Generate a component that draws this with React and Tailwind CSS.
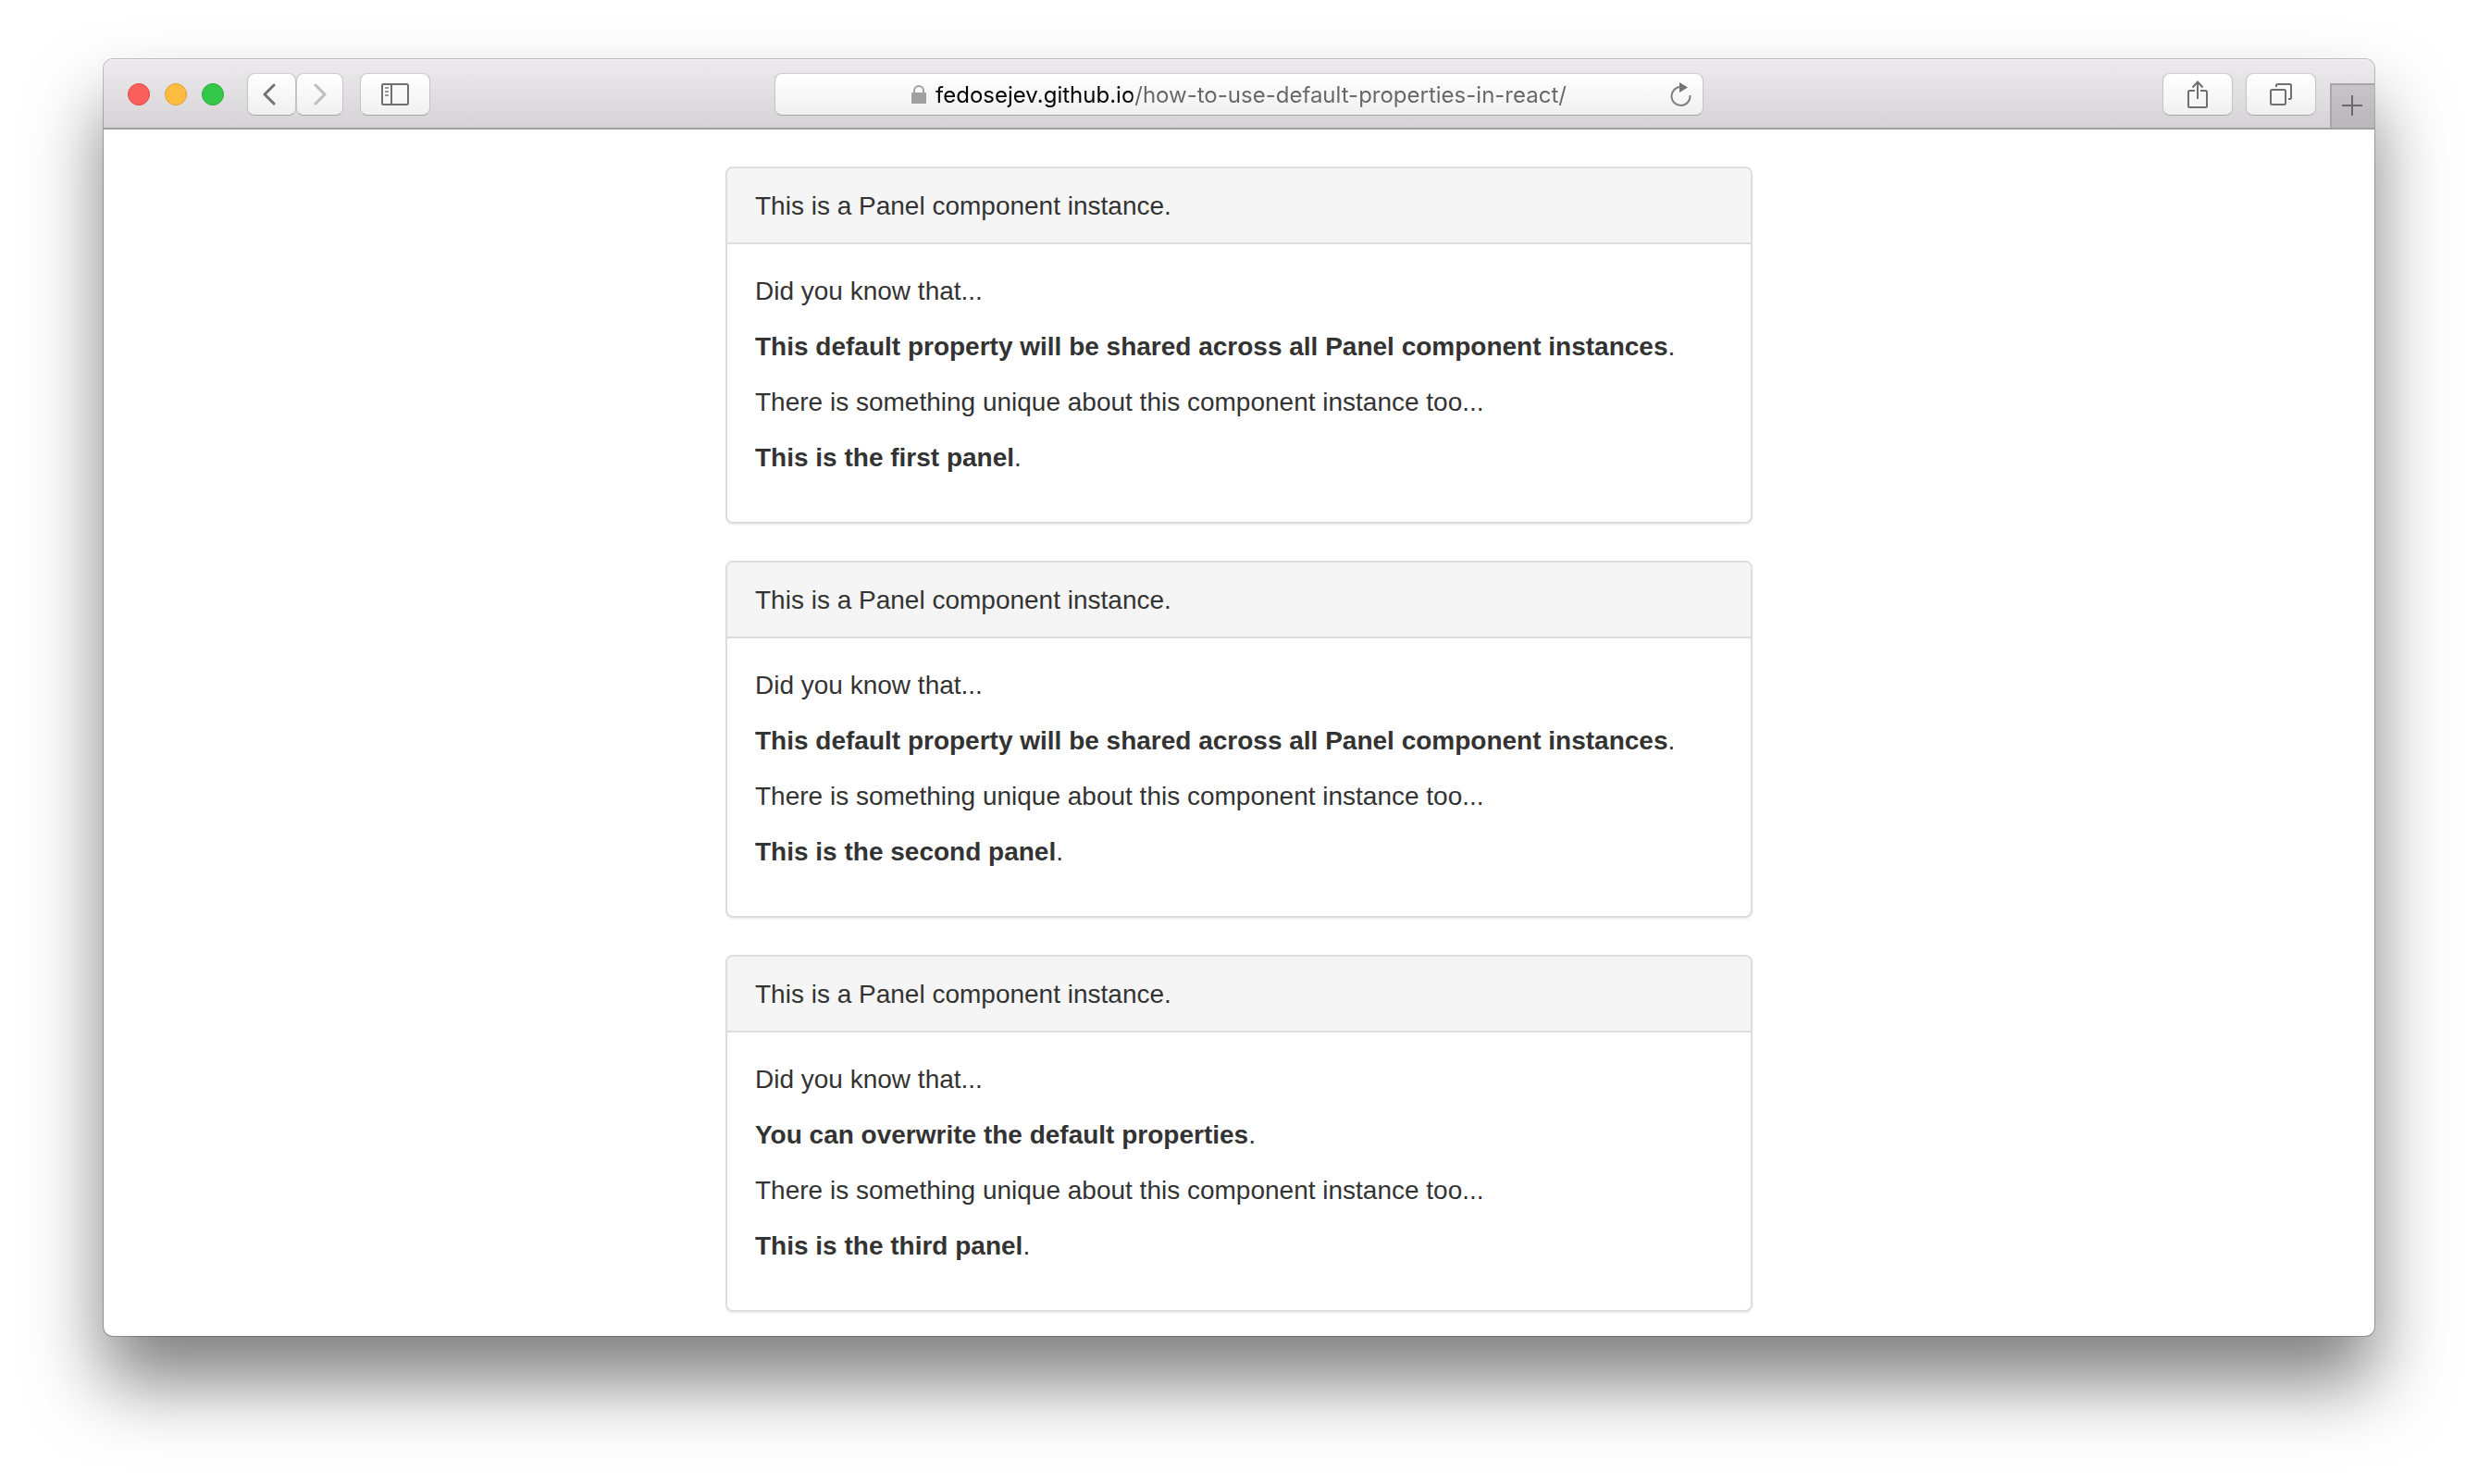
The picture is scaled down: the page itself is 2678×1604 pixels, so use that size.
const CHROME_BUTTON =
  "flex h-[46px] items-center justify-center rounded-lg border border-t-[#cfcdd0] border-x-[#c4c2c5] border-b-[#a9a7aa] bg-linear-to-b from-white to-[#f0f0f0] text-[#6f6f6f]";

const DID_YOU_KNOW = "This default property will be shared across all Panel component instances";

const panels = [
  { id: "first", content: DID_YOU_KNOW, unique: "This is the first panel" },
  { id: "second", content: DID_YOU_KNOW, unique: "This is the second panel" },
  { id: "third", content: "You can overwrite the default properties", unique: "This is the third panel" },
];

function BackIcon() {
  return (
    <svg width="14" height="24" viewBox="0 0 14 24" fill="none" stroke="#737373" strokeWidth="3" strokeLinecap="round" strokeLinejoin="round" aria-hidden="true">
      <path d="M12 2 2 12l10 10" />
    </svg>
  );
}

function ForwardIcon() {
  return (
    <svg width="14" height="24" viewBox="0 0 14 24" fill="none" stroke="#bdbdbd" strokeWidth="3" strokeLinecap="round" strokeLinejoin="round" aria-hidden="true">
      <path d="m2 2 10 10L2 22" />
    </svg>
  );
}

function SidebarIcon() {
  return (
    <svg width="30" height="24" viewBox="0 0 30 24" fill="none" stroke="currentColor" strokeWidth="2" aria-hidden="true">
      <rect x="1" y="1" width="28" height="22" rx="1.5" />
      <path d="M11 1v22" />
      <path d="M4 5h4M4 9h4M4 13h4" stroke="#9b9b9b" />
    </svg>
  );
}

function LockIcon() {
  return (
    <svg width="16" height="20" viewBox="0 0 16 20" fill="none" className="shrink-0" aria-hidden="true">
      <path d="M3 10V6a5 5 0 0 1 10 0v4" stroke="#a0a0a0" strokeWidth="2" />
      <rect y="8" width="16" height="12" rx="1" fill="#a0a0a0" />
    </svg>
  );
}

function ReloadIcon() {
  return (
    <svg width="24" height="26" viewBox="0 0 24 26" fill="none" aria-hidden="true">
      <path d="M13 5h-1a10 10 0 1 0 10.500 10v-1" stroke="#808080" strokeWidth="2" />
      <path d="M11 0v11l9-5.500z" fill="#757575" />
    </svg>
  );
}

function ShareIcon() {
  return (
    <svg width="22" height="30" viewBox="0 0 22 30" fill="none" stroke="currentColor" strokeWidth="2" aria-hidden="true">
      <path d="M8 11H2.500Q1 11 1 12.500v15Q1 29 2.500 29h17q1.500 0 1.500-1.500v-15Q21 11 19.500 11H14" />
      <path d="M11 20V2M5.500 7.500 11 1.500l5.500 6" />
    </svg>
  );
}

function TabsIcon() {
  return (
    <svg width="24" height="24" viewBox="0 0 24 24" fill="none" stroke="currentColor" strokeWidth="2" aria-hidden="true">
      <rect x="1" y="7" width="16" height="16" rx="1.5" />
      <path d="M7 4V2.500Q7 1 8.500 1h13Q23 1 23 2.500v13q0 1.500-1.500 1.500H20" />
    </svg>
  );
}

function PlusIcon() {
  return (
    <svg width="22" height="22" viewBox="0 0 22 22" fill="none" stroke="#6b696c" strokeWidth="2" aria-hidden="true">
      <path d="M11 0v22M0 11h22" />
    </svg>
  );
}

function Toolbar() {
  return (
    <header className="grid h-[76px] grid-cols-[1fr_minmax(0,1004px)_1fr] items-center border-b-2 border-[#a19fa3] bg-linear-to-b from-[#edebee] to-[#d5d3d6] pt-0.5 shadow-[inset_0_1px_0_#f6f5f6]">
      <div className="flex items-center pl-[26px]">
        <div className="flex gap-4">
          <button type="button" aria-label="Close" className="size-6 rounded-full border border-[#e0443f] bg-[#fc605c]" />
          <button type="button" aria-label="Minimize" className="size-6 rounded-full border border-[#dd9f35] bg-[#fdbc40]" />
          <button type="button" aria-label="Zoom" className="size-6 rounded-full border border-[#25ab37] bg-[#34c84a]" />
        </div>
        <div className="ml-[25px] flex">
          <button type="button" aria-label="Back" className={`${CHROME_BUTTON} w-[53px] pr-1.5`}>
            <BackIcon />
          </button>
          <button type="button" aria-label="Forward" className={`${CHROME_BUTTON} w-[51px]`}>
            <ForwardIcon />
          </button>
        </div>
        <button type="button" aria-label="Show sidebar" className={`${CHROME_BUTTON} ml-[18px] w-[76px]`}>
          <SidebarIcon />
        </button>
      </div>
      <div className={`${CHROME_BUTTON} w-full pr-3 pl-9`}>
        <label className="flex flex-1 items-center justify-center gap-2.5">
          <LockIcon />
          <input
            type="text"
            aria-label="Address"
            defaultValue="fedosejev.github.io/how-to-use-default-properties-in-react/"
            className="field-sizing-content bg-linear-to-r from-black from-[213px] to-[#666666] to-[213px] bg-clip-text pt-0.5 font-[Inter,sans-serif] text-2xl text-transparent outline-none"
          />
        </label>
        <button type="button" aria-label="Reload">
          <ReloadIcon />
        </button>
      </div>
      <div className="flex items-center justify-end self-stretch">
        <button type="button" aria-label="Share" className={`${CHROME_BUTTON} w-[76px]`}>
          <ShareIcon />
        </button>
        <button type="button" aria-label="Show all tabs" className={`${CHROME_BUTTON} ml-3.5 w-[76px]`}>
          <TabsIcon />
        </button>
        <button
          type="button"
          aria-label="New tab"
          className="ml-[15px] flex size-12 items-center justify-center self-end border-t-2 border-l-2 border-[#a7a5a8] bg-linear-to-b from-[#c6c4c7] to-[#b9b7ba] pr-0.5 pb-0.5"
        >
          <PlusIcon />
        </button>
      </div>
    </header>
  );
}

function Panel({ content, unique }) {
  return (
    <section className="rounded-lg border-2 border-[#dddddd] bg-white shadow-[0_2px_2px_rgba(0,0,0,0.05)]">
      <h2 className="rounded-t-md border-b-2 border-[#dddddd] bg-[#f5f5f5] px-[30px] pt-[21px] pb-[19px]">
        This is a Panel component instance.
      </h2>
      <div className="flex flex-col gap-5 px-[30px] pt-[31px] pb-[49px]">
        <p>Did you know that...</p>
        <p>
          <strong className="font-bold">{content}</strong>.
        </p>
        <p>There is something unique about this component instance too...</p>
        <p>
          <strong className="font-bold">{unique}</strong>.
        </p>
      </div>
    </section>
  );
}

export default function App() {
  return (
    <div className="flex min-h-screen flex-col bg-white px-28 pt-16 pb-40">
      <div className="flex flex-1 flex-col overflow-hidden rounded-[10px] bg-white shadow-[0_0_0_1px_rgba(0,0,0,0.24),0_50px_80px_rgba(0,0,0,0.5)]">
        <Toolbar />
        <main className="mx-auto flex w-full max-w-[1110px] flex-col gap-10 pt-10 pb-6 font-['Liberation_Sans',Arial,sans-serif] text-[28px] leading-10 text-[#333333]">
          {panels.map((panel) => (
            <Panel key={panel.id} content={panel.content} unique={panel.unique} />
          ))}
        </main>
      </div>
    </div>
  );
}
